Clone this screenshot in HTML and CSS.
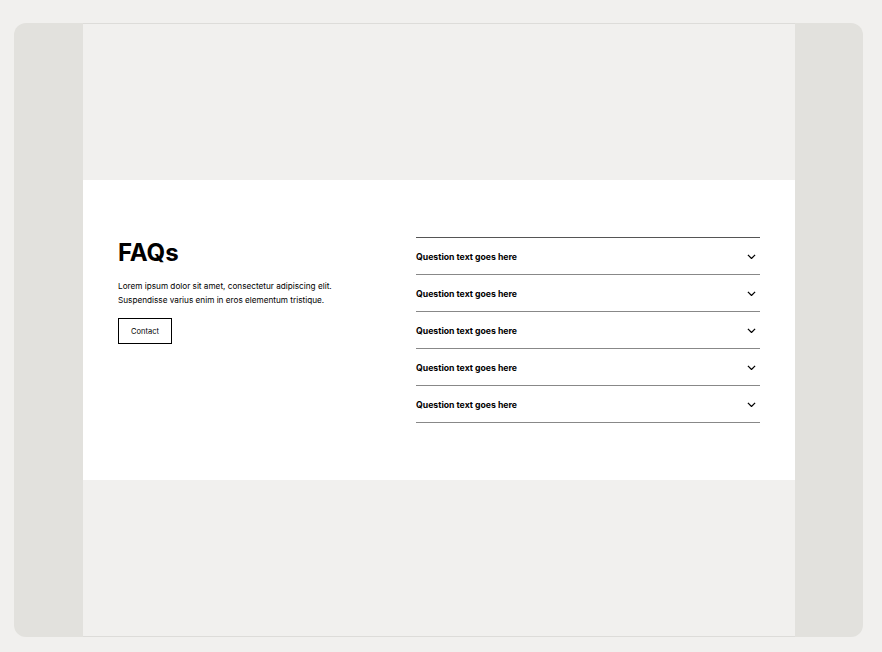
FILE: index.html
```html
<!DOCTYPE html>
<html lang="en">
<head>
<meta charset="utf-8">
<title>FAQs</title>
<link rel="stylesheet" href="styles.css">
</head>
<body>
<div class="frame">
  <div class="side"></div>
  <main class="center">
    <div class="spacer"></div>
    <section class="faq">
      <div class="intro">
        <h1 class="title">FAQs</h1>
        <p class="lead">Lorem ipsum dolor sit amet, consectetur adipiscing elit. Suspendisse varius enim in eros elementum tristique.</p>
        <button class="btn">Contact</button>
      </div>
      <div class="list">
        <div class="item"><span>Question text goes here</span><svg class="chev" viewBox="0 0 10 6"><path d="M1 1l4 4 4-4" /></svg></div>
        <div class="item"><span>Question text goes here</span><svg class="chev" viewBox="0 0 10 6"><path d="M1 1l4 4 4-4" /></svg></div>
        <div class="item"><span>Question text goes here</span><svg class="chev" viewBox="0 0 10 6"><path d="M1 1l4 4 4-4" /></svg></div>
        <div class="item"><span>Question text goes here</span><svg class="chev" viewBox="0 0 10 6"><path d="M1 1l4 4 4-4" /></svg></div>
        <div class="item"><span>Question text goes here</span><svg class="chev" viewBox="0 0 10 6"><path d="M1 1l4 4 4-4" /></svg></div>
      </div>
    </section>
    <div class="spacer"></div>
  </main>
  <div class="side"></div>
</div>
</body>
</html>
```
FILE: styles.css
```css
* { box-sizing: border-box; }
html, body { margin: 0; padding: 0; }
body {
  background: #f1f0ee;
  font-family: Inter, "Liberation Sans", sans-serif;
  color: #000;
  padding: 23px 19px 15px 14px;
}
.frame {
  display: flex;
  width: 849px;
  height: 614px;
  border-radius: 12px;
  overflow: hidden;
  background: #e2e1dd;
}
.side { flex: 1; }
.side:first-child { flex: 0 0 69px; }
.side:last-child { flex: 0 0 68px; }
.center {
  width: 712px;
  display: flex;
  flex-direction: column;
  background: #f1f0ee;
  border-top: 1px solid #dddcd9;
  border-bottom: 1px solid #dddcd9;
}
.spacer { flex: 1; }
.faq {
  background: #fff;
  height: 300px;
  padding: 57px 35px 0 35px;
  display: grid;
  grid-template-columns: 1fr 344px;
}
.title {
  margin: 0;
  font-size: 24px;
  font-weight: 700;
  line-height: 32px;
  letter-spacing: -0.1px;
}
.lead {
  margin: 10px 0 0;
  font-size: 8.2px;
  line-height: 14px;
  max-width: 240px;
}
.btn {
  margin-top: 11px;
  width: 54px;
  height: 26px;
  border: 1px solid #000;
  background: #fff;
  font-family: inherit;
  font-size: 7.5px;
  color: #000;
  padding: 0;
  cursor: pointer;
}
.list {
  border-top: 1px solid #555;
}
.item {
  height: 37px;
  border-bottom: 1px solid #888;
  display: flex;
  align-items: center;
  justify-content: space-between;
  font-size: 8.7px;
  font-weight: 700;
  padding-top: 1px;
}
.chev {
  width: 9px;
  height: 5.4px;
  margin-right: 4px;
  fill: none;
  stroke: #000;
  stroke-width: 1.4;
}
```
